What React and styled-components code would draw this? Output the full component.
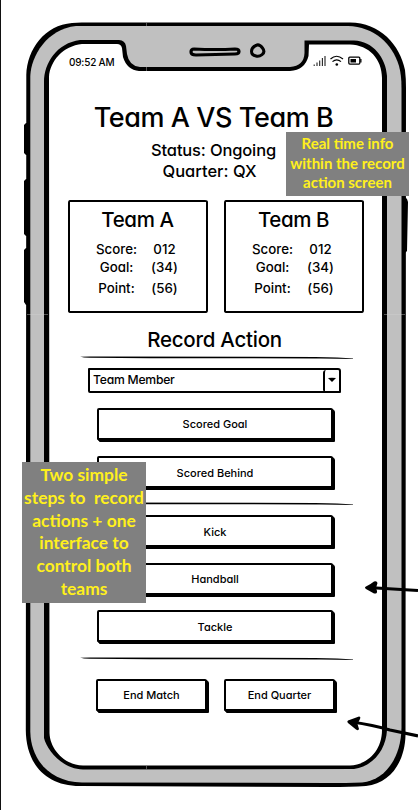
import React from 'react';
import styled, { createGlobalStyle } from 'styled-components';

const GlobalStyle = createGlobalStyle`
  * { box-sizing: border-box; }
  body { margin: 0; background: #fff; overflow: hidden; }
`;

const Page = styled.div`
  position: relative;
  width: 418px;
  height: 810px;
  background: #fff;
  border-left: 1px solid #111;
  overflow: hidden;
  color: #000;
  font-family: Inter, "Liberation Sans", sans-serif;
  font-feature-settings: "cv11" 1, "calt" 0;
  font-weight: 450;
`;

const Artwork = styled.svg`
  position: absolute;
  top: 0;
  left: -1px;
  pointer-events: none;
`;

const Screen = styled.main`
  position: relative;
  width: 334px;
  height: 726px;
  margin: 43px 0 0 48px;
  display: flex;
  flex-direction: column;
`;

const StatusBar = styled.header`
  display: flex;
  justify-content: space-between;
  align-items: flex-start;
  height: 58px;
  padding: 13px 21px 0 20px;
`;

const Text = styled.span`
  display: block;
  white-space: pre;
  font-size: ${(p) => p.$size}px;
  line-height: ${(p) => p.$line || 20}px;
  letter-spacing: ${(p) => p.$track || 0}px;
`;

const StatusIcons = styled.svg`
  display: block;
  margin-top: -2px;
`;

const MatchHeader = styled.section`
  display: flex;
  flex-direction: column;
  align-items: center;
  height: 99px;
  padding: 1px 5px 0 0;
`;

const Title = styled.h1`
  margin: 0 0 6px;
  font-size: 27px;
  line-height: 32px;
  font-weight: 450;
  letter-spacing: -0.42px;
  white-space: nowrap;
`;

const QuarterLine = styled.div`
  padding-right: 8px;
`;

const ScoreCards = styled.section`
  display: flex;
  gap: 16px;
  padding-left: 19px;
  height: 127px;
`;

const Card = styled.article`
  width: 140px;
  height: 113px;
  border: 2px solid #000;
  border-width: 2px 2px 2.5px 2px;
  border-radius: 2px 3px 2px 3px / 3px 2px 3px 2px;
  padding: 5px 1px 0 0;
  display: flex;
  flex-direction: column;
  align-items: center;
`;

const ScoreGrid = styled.div`
  display: grid;
  grid-template-columns: 56px 40px;
  grid-template-rows: 18px 20.5px 20px;
  justify-items: center;
  margin: 7px 2px 0 0;
`;

const Heading = styled.h2`
  margin: 0 0 3.5px;
  padding-right: 3px;
  text-align: center;
  font-size: 20.5px;
  line-height: 25px;
  font-weight: 450;
  letter-spacing: -0.25px;
`;

const Divider = styled.svg`
  display: block;
  flex: none;
  margin-left: 31px;
`;

const Select = styled.button`
  display: flex;
  flex: none;
  align-items: stretch;
  justify-content: space-between;
  width: 253px;
  height: 24.5px;
  margin: 8.5px 0 0 39px;
  padding: 0 0 0 3px;
  border: 2px solid #000;
  border-radius: 1px 3px 1px 2px;
  background: #fff;
  color: #000;
  font: inherit;
  font-feature-settings: inherit;
`;

const SelectArrow = styled.span`
  display: flex;
  align-items: center;
  justify-content: center;
  width: 16px;
  border-left: 2px solid #000;
  border-radius: 3px 0 0 1px;
`;

const ButtonStack = styled.div`
  display: flex;
  flex: none;
  flex-direction: column;
  gap: ${(p) => p.$gap}px;
  padding: ${(p) => p.$top}px 0 0 48px;
  height: ${(p) => p.$height}px;
`;

const ButtonPair = styled.div`
  display: flex;
  gap: 17px;
  padding: 17.5px 0 0 47px;
`;

const SketchButton = styled.button`
  display: flex;
  flex: none;
  align-items: center;
  justify-content: center;
  width: ${(p) => p.$width || 236}px;
  height: 32px;
  padding: 1px 0 0;
  border: 2px solid #000;
  border-radius: 2px 2px 1px 1px;
  box-shadow: 1px 1px 0 #000, 2px 2px 0 #000;
  background: #fff;
  color: #000;
  font: inherit;
  font-feature-settings: inherit;
`;

const Note = styled.aside`
  position: absolute;
  left: ${(p) => p.$x - 1}px;
  top: ${(p) => p.$y}px;
  width: ${(p) => p.$w}px;
  height: ${(p) => p.$h}px;
  padding-top: ${(p) => p.$pad}px;
  background: #808080;
  color: #fff01c;
  display: flex;
  flex-direction: column;
  align-items: center;
  font-family: Lato, "Open Sans", sans-serif;
  font-feature-settings: normal;
  font-weight: 700;
`;

function PhoneBody() {
  return (
    <Artwork width="418" height="810" viewBox="0 0 418 810">
      <path fill="#000" d="M26 123 L24 125 L24 153 L26 155 L28 155 L28 123 Z M26 179 L24 181 L24 234 L26 236 L28 236 L28 179 Z M26 248 L24 250 L24 302 L26 305 L28 305 L28 248 Z M404 196 L407 199 L408 202 L407 251 L405 253 L403 253 Z" />
      <path fill="#000" d="M72 23 Q78 22.4 85 22.6 L350 22.6 C380 22.6 400 45 405 70 Q406 78 406 88 L405.5 735 C405 760 392 783 366 786 Q350 787 330 787 L80 786 C44 786 26 762 25.8 730 L26.3 75 C27 49 45 25 72 23 Z" />
      <path fill="#c0c0c0" d="M76 26 L348 26 C374 27 392 43 399 66 Q401.5 75 401.5 88 L401.5 728 C401 757 386 780 362 782.5 Q345 783 330 783 L82 782.5 C50 782 31 760 30.3 732 L30.3 76 C31 56 47 29 76 26 Z" />
      <path fill="#000" d="M80 40 L119 40 Q125 40.5 126 46 L127 54 Q129 66 140 67 L290 67 Q304 66 304.5 53 L304.5 40.5 L354 40.5 C373 41 386 58 387 76 L387 730 C386 749 374 766 354 769 L83 769.5 C62 769 47 750 44 738 L44 82 C44 63 57 43 80 40 Z" />
      <path fill="#fff" d="M82 44 L117 44 Q121 44 122 48 L123 57 Q127 70 139 71 L290 71 Q305 70 308.5 56 L309 44.5 L350 44.5 C369 45 382 59 382 78 L382 730 C382 751 367 765 350 765.5 L83 765.5 C64 765 50 749 49.5 733 L49 77 C50 61 63 46 82 44 Z" />
      <path d="M194 49 Q216 50 235 49 Q239 49 239 51.5 Q239 54 235 54 L196 55 Q191 55 191 52 Q191 49 194 49 Z" fill="#c0c0c0" stroke="#000" strokeWidth="3.2" />
      <path d="M256 45.5 Q259 43.5 262.5 48 C267 54 259 57 256 56 C250 55 250 48 256 45.5 Z" fill="#c0c0c0" stroke="#000" strokeWidth="3" />
      <g stroke="#d4d4d4" strokeWidth=".6" opacity=".65">
        <path d="M27 314.5 H48 M384 314.5 H405 M146.5 23 V26 M146.5 67 V71 M146.5 766 V769" />
      </g>
    </Artwork>
  );
}

function Arrows() {
  return (
    <Artwork width="418" height="810" viewBox="0 0 418 810">
      <path d="M368 587.5 L418 590.5" stroke="#000" strokeWidth="3.2" fill="none" />
      <path d="M366 586.5 Q371 584 374 581.5 Q377 580.5 377.5 583 L376 588 L377 591 Q377.5 594 374 593.5 L366 589 Q364 587.5 366 586.5 Z" />
      <path d="M352 722 Q373 725 390 730 L418 736" stroke="#000" strokeWidth="3.2" fill="none" />
      <path d="M348 720.5 L359 716.5 Q361 716.5 360 719 L357.5 724 L359 729 Q358.5 731 356 729.5 L348 723 Q346.5 721.5 348 720.5 Z" />
    </Artwork>
  );
}

function DeviceIcons() {
  return (
    <StatusIcons width="49" height="13" viewBox="0 0 49 13">
      <path d="M1.2 12 V10.5 M4 12 V8.5 M6.7 12 V6.5 M9.4 12 V4 M12 12 V2" stroke="#222" strokeWidth="1.1" fill="none" />
      <path d="M17.5 5 Q23.5 -.5 30 5 M19.5 7.6 Q23.7 4 28 7.6" stroke="#000" strokeWidth="1.2" fill="none" />
      <circle cx="23.8" cy="10.5" r="1.3" />
      <rect x="35.8" y="3.1" width="11" height="7" rx="1" stroke="#000" strokeWidth="1.3" fill="none" />
      <path d="M37.5 4.9 H43 V8.4 H37.5 Z M47.2 5 H48.5 V8.5 H47.2 Z" />
    </StatusIcons>
  );
}

function Rule() {
  return (
    <Divider width="274" height="4" viewBox="0 0 274 4">
      <path d="M0 .7 Q5 .3 18 .5 L235 1 Q260 1.5 273 2.4 L273 3 Q255 2.3 235 2.4 L70 2.2 L10 1.7 Q3 1.5 0 .7 Z" />
    </Divider>
  );
}

function TeamCard({ name }) {
  const rows = [['Score:', '012'], ['Goal:', '(34)'], ['Point:', '(56)']];
  return (
    <Card>
      <Text $size={20.5} $line={25} $track={-0.4}>{name}</Text>
      <ScoreGrid>
        {rows.map(([label, value]) => (
          <React.Fragment key={label}>
            <Text $size={13.3} $line={20}>{label}</Text>
            <Text $size={13.3} $line={20}>{value}</Text>
          </React.Fragment>
        ))}
      </ScoreGrid>
    </Card>
  );
}

function Action({ label, width }) {
  return (
    <SketchButton $width={width}>
      <Text $size={11} $line={16}>{label}</Text>
    </SketchButton>
  );
}

export default function App() {
  return (
    <>
      <GlobalStyle />
      <Page>
        <PhoneBody />
        <Screen>
          <StatusBar>
            <Text $size={10} $line={13} $track={-0.2}>09:52 AM</Text>
            <DeviceIcons />
          </StatusBar>
          <MatchHeader>
            <Title>Team A VS Team B</Title>
            <Text $size={16.5} $line={21} $track={-0.15}>Status: Ongoing</Text>
            <QuarterLine>
              <Text $size={16.5} $line={21}>Quarter: QX</Text>
            </QuarterLine>
          </MatchHeader>
          <ScoreCards>
            <TeamCard name="Team A" />
            <TeamCard name="Team B" />
          </ScoreCards>
          <Heading>Record Action</Heading>
          <Rule />
          <Select>
            <Text $size={12.2} $line={20} $track={-0.25}>Team Member</Text>
            <SelectArrow>
              <svg width="8" height="6" viewBox="0 0 8 6"><path d="M0 1 Q4 .5 8 1 Q6 3 4 5 Z" /></svg>
            </SelectArrow>
          </Select>
          <ButtonStack $gap={16.5} $top={15} $height={109}>
            <Action label="Scored Goal" />
            <Action label="Scored Behind" />
          </ButtonStack>
          <Rule />
          <ButtonStack $gap={15.5} $top={9.5} $height={151.5}>
            <Action label="Kick" />
            <Action label="Handball" />
            <Action label="Tackle" />
          </ButtonStack>
          <Rule />
          <ButtonPair>
            <Action label="End Match" width={111} />
            <Action label="End Quarter" width={111} />
          </ButtonPair>
        </Screen>
        <Note $x={286} $y={132} $w={123} $h={64} $pad={2}>
          <Text $size={15} $line={19.5}>Real time info</Text>
          <Text $size={15} $line={19.5}>within the record</Text>
          <Text $size={15} $line={19.5}>action screen</Text>
        </Note>
        <Note $x={22} $y={462} $w={124} $h={141} $pad={2}>
          {['Two simple', 'steps to  record', 'actions + one', 'interface to', 'control both', 'teams'].map((line) => (
            <Text key={line} $size={17.4} $line={22.8}>{line}</Text>
          ))}
        </Note>
        <Arrows />
      </Page>
    </>
  );
}
